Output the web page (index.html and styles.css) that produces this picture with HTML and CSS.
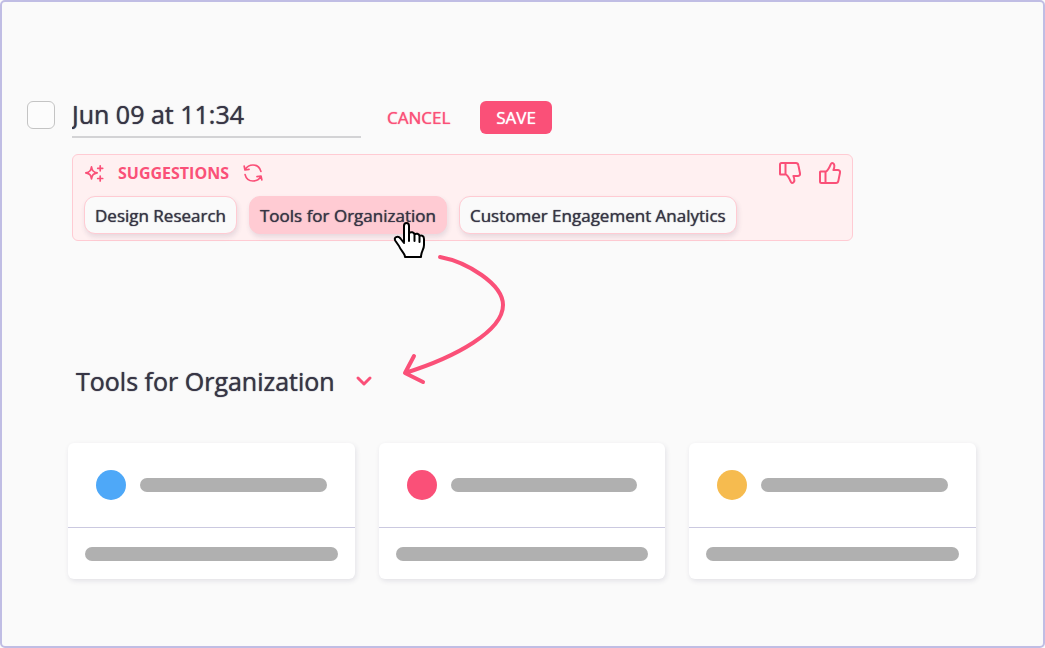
FILE: index.html
```html
<!DOCTYPE html>
<html lang="en">
<head>
    <meta charset="UTF-8">
    <meta name="viewport" content="width=device-width, initial-scale=1.0">
    <title>Suggestions</title>
    <link rel="stylesheet" href="styles.css">
</head>
<body>
    <main class="frame">
        <form class="editor">
            <input type="checkbox" class="check" aria-label="Select section">
            <input type="text" class="title-input" aria-label="Section title" value="Jun 09 at 11:34">
            <button type="button" class="btn">CANCEL</button>
            <button type="button" class="btn btn-save">SAVE</button>
        </form>

        <section class="suggestions">
            <div class="suggestions-head">
                <svg class="sparkle" width="20" height="20" viewBox="0 0 20 20" aria-hidden="true">
                    <path d="M7.5 3.8 C8.2 7.8 9.2 9 13.2 9.8 C9.2 10.6 8.2 11.8 7.5 15.8 C6.8 11.8 5.8 10.6 1.8 9.8 C5.8 9 6.8 7.8 7.5 3.8 Z"/>
                    <path d="M16.2 2.8 V7.8 M13.7 5.3 H18.7 M16.2 13 V18 M13.7 15.5 H18.7"/>
                </svg>
                <h2>SUGGESTIONS</h2>
                <button type="button" class="icon-btn" aria-label="Refresh suggestions">
                    <svg class="refresh" width="20" height="20" viewBox="0 0 20 20" aria-hidden="true">
                        <path d="M2.2 6.4 C4 3.4 7 2 10 2 C14 2 17 4.6 17.9 8.4 M1.2 3.2 L2 7 L6 6.4"/>
                        <path d="M17.8 13.6 C16 16.6 13 18 10 18 C6 18 3 15.4 2.1 11.6 M18.8 16.8 L18 13 L14 13.6"/>
                    </svg>
                </button>
                <div class="feedback">
                    <button type="button" class="icon-btn" aria-label="Dislike">
                        <svg class="thumb-down" width="24" height="24" viewBox="0 0 24 24" aria-hidden="true">
                            <path d="M2.5 10.5 H7.5 V22 H3.5 Q2 22 2 20.5 V11 Q2 10.5 2.5 10.5 Z M7.5 11 C9.5 9.8 11 7.4 12.6 3.6 Q13.6 1.4 15.2 2.4 C17 3.6 16.6 6 15.4 9 H20 Q22.4 9.4 22 11.8 L20.4 19.6 Q20 22 18 22 H7"/>
                        </svg>
                    </button>
                    <button type="button" class="icon-btn" aria-label="Like">
                        <svg width="24" height="24" viewBox="0 0 24 24" aria-hidden="true">
                            <path d="M2.5 10.5 H7.5 V22 H3.5 Q2 22 2 20.5 V11 Q2 10.5 2.5 10.5 Z M7.5 11 C9.5 9.8 11 7.4 12.6 3.6 Q13.6 1.4 15.2 2.4 C17 3.6 16.6 6 15.4 9 H20 Q22.4 9.4 22 11.8 L20.4 19.6 Q20 22 18 22 H7"/>
                        </svg>
                    </button>
                </div>
            </div>
            <div class="chips">
                <button type="button" class="chip">Design Research</button>
                <div class="chip-wrap">
                    <button type="button" class="chip active">Tools for Organization</button>
                    <svg class="cursor" width="34" height="38" viewBox="0 0 34 38" aria-hidden="true">
                        <path d="M11 21 V5 C11 1 16 1 16 5 V12 C18 10.5 21 11 21.5 13.5 C23 12 26 12.5 26.5 15 C28.5 13.8 31 15 31 18 V24 C31 29 28 30 28 36 H12 C12 32 8 30 6 25 L2.5 20 C0 16 5 14.5 7.5 17.5 L11 22 M16 12 V20 M21.5 13.5 V20 M26.5 15 V21"/>
                    </svg>
                    <svg class="arrow" width="110" height="135" viewBox="0 0 110 135" aria-hidden="true">
                        <path d="M41 5 C68 10 104 32 104 53 C104 79 57 105 6 121 M15 104 L6 121 L24 130"/>
                    </svg>
                </div>
                <button type="button" class="chip">Customer Engagement Analytics</button>
            </div>
        </section>

        <section class="board">
            <button type="button" class="board-title">
                Tools for Organization
                <svg width="18" height="12" viewBox="0 0 18 12" aria-hidden="true">
                    <path d="M3 3 L9 9 L15 3"/>
                </svg>
            </button>
            <div class="cards">
                <article class="card">
                    <div class="card-top">
                        <span class="dot blue"></span>
                        <span class="bar"></span>
                    </div>
                    <div class="card-bottom"><span class="bar"></span></div>
                </article>
                <article class="card">
                    <div class="card-top">
                        <span class="dot pink"></span>
                        <span class="bar"></span>
                    </div>
                    <div class="card-bottom"><span class="bar"></span></div>
                </article>
                <article class="card">
                    <div class="card-top">
                        <span class="dot yellow"></span>
                        <span class="bar"></span>
                    </div>
                    <div class="card-bottom"><span class="bar"></span></div>
                </article>
            </div>
        </section>
    </main>
</body>
</html>
```
FILE: styles.css
```css
* {
    box-sizing: border-box;
}
body {
    margin: 0;
    background: #fafafa;
    color: #373545;
    font-family: "Open Sans", "Noto Sans", sans-serif;
    font-weight: 500;
}
button, input {
    font: inherit;
    color: inherit;
    margin: 0;
    padding: 0;
    border: none;
    background: none;
    text-shadow: 0 0 1px currentColor; /* thickens the regular weight a little */
}
button {
    cursor: pointer;
}
svg {
    display: block;
    fill: none;
    stroke: #fa5078;
    stroke-width: 2;
    stroke-linecap: round;
    stroke-linejoin: round;
}
.frame {
    min-height: 100vh;
    padding: 91px 67px 67px 25px;
    border: 2px solid #c0bde4;
    border-radius: 5px;
}

/* title row */
.editor {
    display: flex;
    align-items: flex-start;
}
.check {
    appearance: none;
    width: 28px;
    height: 28px;
    margin: 8px 17px 0 0;
    background: #fcfcfc;
    border: 1px solid #c4c4c4;
    border-radius: 6px;
}
.title-input {
    width: 289px;
    height: 45px;
    padding-bottom: 2px;
    font-size: 25px;
    border-bottom: 2px solid #d3d3d5;
}
.btn {
    height: 33px;
    margin: 8px 14px 0 10px;
    padding: 0 16px;
    font-size: 17px;
    color: #fa5078;
    border-radius: 6px;
}
.btn-save {
    margin-left: 0;
    color: #fff;
    background: #fa5078;
}

/* suggestions */
.suggestions {
    max-width: 781px;
    margin: 16px 0 0 45px;
    padding: 5px 10px 6px 11px;
    background: #fff0f1;
    border: 1px solid #ffcbd3;
    border-radius: 6px;
}
.suggestions-head {
    display: flex;
    align-items: center;
    height: 26px;
    margin-bottom: 10px;
}
.suggestions h2 {
    margin: 0 14px;
    font-size: 16px;
    font-weight: 700;
    color: #fa5078;
}
.sparkle,
.refresh {
    stroke-width: 1.7;
}
.feedback {
    display: flex;
    gap: 16px;
    margin-left: auto;
}
.thumb-down {
    transform: scaleY(-1);
}
.chips {
    display: flex;
    gap: 12px;
}
.chip-wrap {
    position: relative;
}
.chip {
    height: 38px;
    padding: 0 10px;
    font-size: 17px;
    white-space: nowrap;
    background: #fafafa;
    border: 1px solid #ffcbd3;
    border-radius: 11px;
    box-shadow: 1px 3px 5px rgba(55, 53, 90, 0.12);
}
.chip.active {
    background: #ffcbd3;
}
.cursor {
    position: absolute;
    top: 25px;
    right: 20px;
    fill: #fff;
    stroke: #000;
}
.arrow {
    position: absolute;
    top: 56px;
    right: -62px;
    stroke-width: 4;
    pointer-events: none;
}

/* cards */
.board {
    margin: 124px 0 0 41px;
}
.board-title {
    display: flex;
    align-items: center;
    gap: 20px;
    height: 32px;
    margin-left: 8px;
    font-size: 25px;
}
.board-title svg {
    stroke-width: 3;
}
.cards {
    display: grid;
    grid-template-columns: repeat(3, 1fr);
    gap: 24px;
    margin-top: 46px;
}
.card {
    background: #fff;
    border-radius: 6px;
    box-shadow: 1px 2px 5px rgba(55, 53, 90, 0.12);
}
.card-top {
    display: flex;
    align-items: center;
    gap: 14px;
    height: 85px;
    padding: 0 28px;
    border-bottom: 1px solid #cbc9e0;
}
.card-bottom {
    display: flex;
    align-items: center;
    height: 51px;
    padding: 0 17px;
}
.dot {
    width: 30px;
    height: 30px;
    border-radius: 50%;
}
.blue {
    background: #4ea8f8;
}
.pink {
    background: #fa5078;
}
.yellow {
    background: #f6bb4f;
}
.bar {
    flex: 1;
    height: 14px;
    border-radius: 7px;
    background: #b0b0b0;
}
```
